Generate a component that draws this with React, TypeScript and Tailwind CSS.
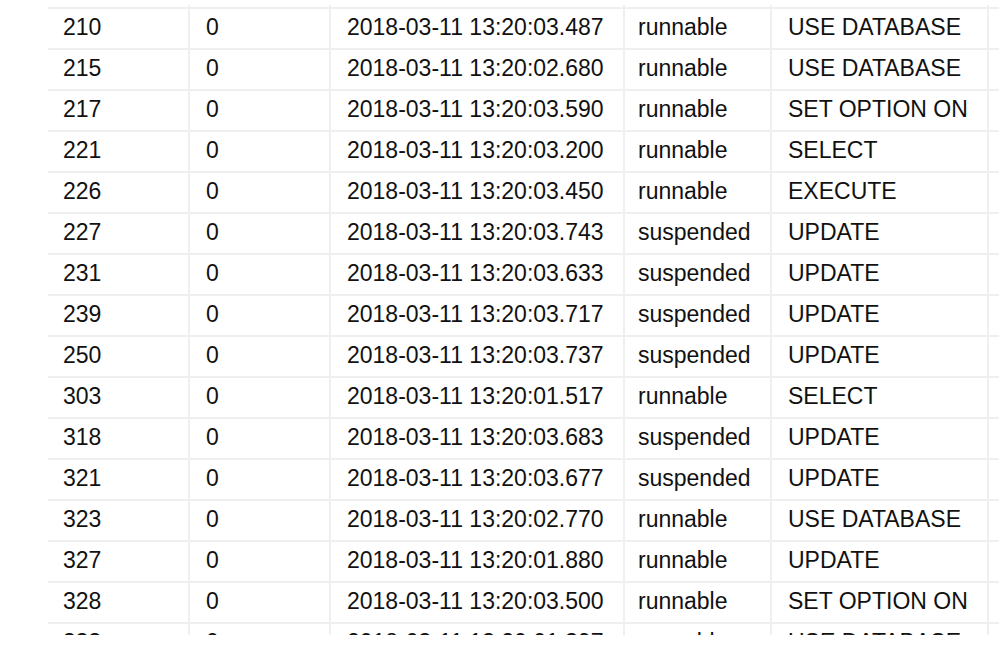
import React from 'react';

type Row = {
  id: string;
  blocked: string;
  startTime: string;
  status: string;
  command: string;
};

const rows: Row[] = [
  { id: '210', blocked: '0', startTime: '2018-03-11 13:20:03.487', status: 'runnable', command: 'USE DATABASE' },
  { id: '215', blocked: '0', startTime: '2018-03-11 13:20:02.680', status: 'runnable', command: 'USE DATABASE' },
  { id: '217', blocked: '0', startTime: '2018-03-11 13:20:03.590', status: 'runnable', command: 'SET OPTION ON' },
  { id: '221', blocked: '0', startTime: '2018-03-11 13:20:03.200', status: 'runnable', command: 'SELECT' },
  { id: '226', blocked: '0', startTime: '2018-03-11 13:20:03.450', status: 'runnable', command: 'EXECUTE' },
  { id: '227', blocked: '0', startTime: '2018-03-11 13:20:03.743', status: 'suspended', command: 'UPDATE' },
  { id: '231', blocked: '0', startTime: '2018-03-11 13:20:03.633', status: 'suspended', command: 'UPDATE' },
  { id: '239', blocked: '0', startTime: '2018-03-11 13:20:03.717', status: 'suspended', command: 'UPDATE' },
  { id: '250', blocked: '0', startTime: '2018-03-11 13:20:03.737', status: 'suspended', command: 'UPDATE' },
  { id: '303', blocked: '0', startTime: '2018-03-11 13:20:01.517', status: 'runnable', command: 'SELECT' },
  { id: '318', blocked: '0', startTime: '2018-03-11 13:20:03.683', status: 'suspended', command: 'UPDATE' },
  { id: '321', blocked: '0', startTime: '2018-03-11 13:20:03.677', status: 'suspended', command: 'UPDATE' },
  { id: '323', blocked: '0', startTime: '2018-03-11 13:20:02.770', status: 'runnable', command: 'USE DATABASE' },
  { id: '327', blocked: '0', startTime: '2018-03-11 13:20:01.880', status: 'runnable', command: 'UPDATE' },
  { id: '328', blocked: '0', startTime: '2018-03-11 13:20:03.500', status: 'runnable', command: 'SET OPTION ON' },
  // last row is cut off by the viewport edge
  { id: '333', blocked: '0', startTime: '2018-03-11 13:20:01.397', status: 'runnable', command: 'USE DATABASE' },
];

const cell = 'flex items-center pb-[2px] border-r-2 border-[#efefef] whitespace-nowrap overflow-hidden';

function GridRow({ row }: { row: Row }) {
  return (
    <div className="flex h-[41px] shrink-0 border-t-2 border-[#efefef]">
      <div className={`${cell} w-[142px] pl-[15px]`}>{row.id}</div>
      <div className={`${cell} w-[141px] pl-[16px]`}>{row.blocked}</div>
      <div className={`${cell} w-[294px] pl-[16px]`}>{row.startTime}</div>
      <div className={`${cell} w-[147px] pl-[13px]`}>{row.status}</div>
      <div className={`${cell} w-[217px] pl-[16px]`}>{row.command}</div>
      <div className="flex-1" />
    </div>
  );
}

export default function App() {
  return (
    <div className="w-[999px] h-[656px] bg-white overflow-hidden pt-[5px] pl-[48px]">
      <div
        className="flex flex-col h-[630px] overflow-hidden text-[23px] text-[#111]"
        style={{ fontFamily: '"Liberation Sans", Arial, sans-serif' }}
      >
        {/* tail of the row above, scrolled out of view */}
        <div className="flex h-[2px] shrink-0">
          <div className="w-[142px] border-r-2 border-[#efefef]" />
          <div className="w-[141px] border-r-2 border-[#efefef]" />
          <div className="w-[294px] border-r-2 border-[#efefef]" />
          <div className="w-[147px] border-r-2 border-[#efefef]" />
          <div className="w-[217px] border-r-2 border-[#efefef]" />
        </div>
        {rows.map(row => (
          <GridRow key={row.id} row={row} />
        ))}
      </div>
    </div>
  );
}
